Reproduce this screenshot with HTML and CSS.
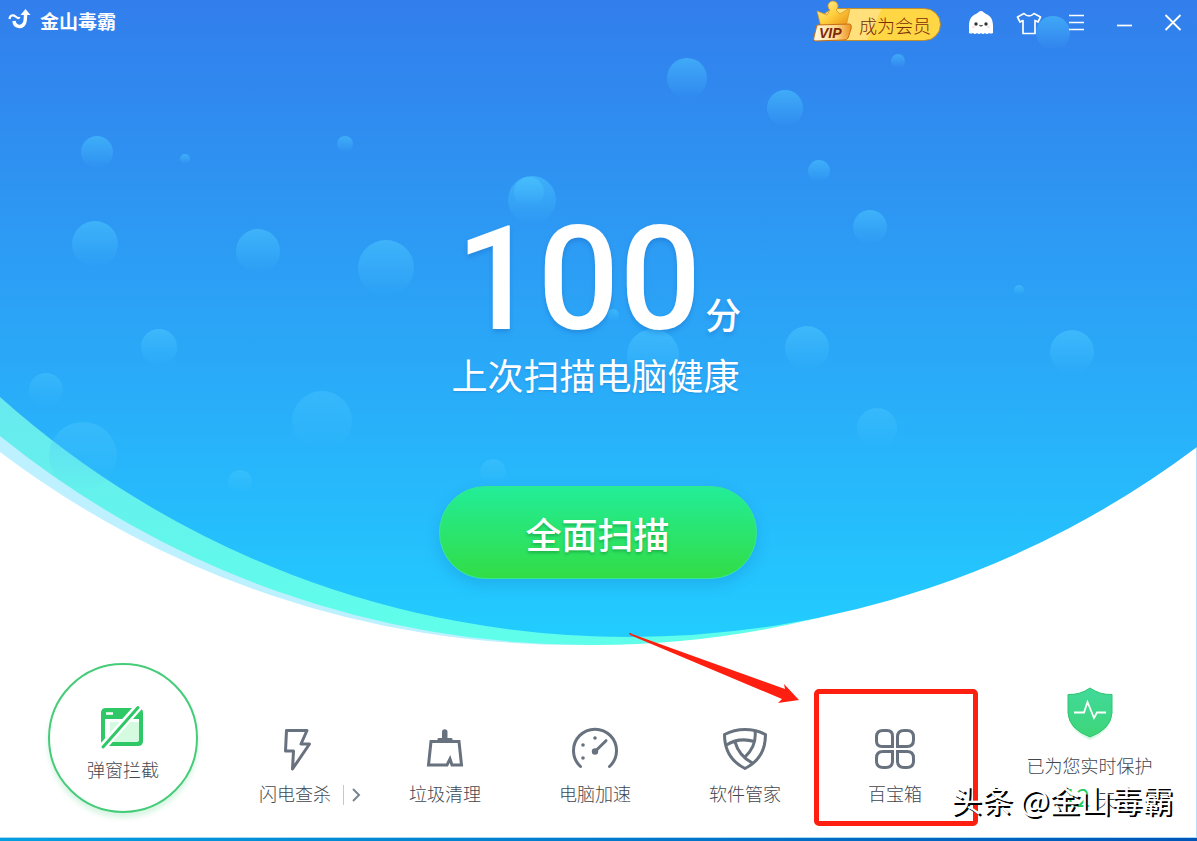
FILE: index.html
```html
<!DOCTYPE html>
<html lang="zh-CN">
<head>
<meta charset="utf-8">
<title>金山毒霸</title>
<link rel="stylesheet" href="styles.css">
</head>
<body>
<div class="app">
  <svg class="backdrop" viewBox="0 0 1197 647" preserveAspectRatio="none" aria-hidden="true">
    <defs>
      <linearGradient id="sky" gradientUnits="userSpaceOnUse" x1="0" y1="0" x2="0" y2="640">
        <stop offset="0" stop-color="#327eec"/>
        <stop offset="0.62" stop-color="#29adf9"/>
        <stop offset="1" stop-color="#22cdff"/>
      </linearGradient>
      <linearGradient id="mint" gradientUnits="userSpaceOnUse" x1="0" y1="397" x2="0" y2="645">
        <stop offset="0" stop-color="#68e9ee"/>
        <stop offset="1" stop-color="#5fffea"/>
      </linearGradient>
      <linearGradient id="bubble" x1="0" y1="0" x2="0" y2="1">
        <stop offset="0" stop-color="#4cc8ff" stop-opacity="0.55"/>
        <stop offset="1" stop-color="#4cc8ff" stop-opacity="0"/>
      </linearGradient>
    </defs>
    <path fill="#bdf1ff" d="M0 0V452A953 953 0 0 0 575 645A953 953 0 0 0 1100 487V0Z"/>
    <path fill="url(#mint)" d="M0 0V436A938 938 0 0 0 590 645A938 938 0 0 0 1100 497V0Z"/>
    <path fill="url(#sky)" d="M0 0V397A944 944 0 0 0 629 637A944 944 0 0 0 1197 447V0Z"/>
    <g fill="url(#bubble)">
      <circle cx="1053" cy="33" r="17"/><circle cx="898" cy="61" r="7"/>
      <circle cx="687" cy="78" r="20"/><circle cx="785" cy="108" r="18"/>
      <circle cx="819" cy="171" r="11"/><circle cx="870" cy="227" r="17"/>
      <circle cx="97" cy="152" r="16"/><circle cx="185" cy="159" r="5"/>
      <circle cx="345" cy="144" r="8"/><circle cx="95" cy="244" r="23"/>
      <circle cx="258" cy="251" r="22"/><circle cx="386" cy="268" r="28"/>
      <circle cx="532" cy="200" r="24"/><circle cx="529" cy="192" r="15"/>
      <circle cx="159" cy="347" r="18"/><circle cx="613" cy="315" r="6"/>
      <circle cx="653" cy="355" r="26"/><circle cx="807" cy="348" r="22"/>
      <circle cx="1019" cy="290" r="5"/><circle cx="1072" cy="352" r="22"/>
    </g>
    <g fill="url(#bubble)" opacity="0.75">
      <circle cx="46" cy="390" r="17"/><circle cx="322" cy="421" r="30"/>
      <circle cx="83" cy="456" r="34"/><circle cx="240" cy="482" r="12"/>
      <circle cx="493" cy="472" r="13"/><circle cx="877" cy="428" r="20"/>
    </g>
  </svg>

  <header class="titlebar">
    <div class="brand">
      <svg class="brand-mark" viewBox="0 0 24 24" aria-hidden="true">
        <path d="M1.500 10C2 6 5 5.500 7.500 7.500S11 9.500 11.500 8" fill="none" stroke="#fff" stroke-width="2.200"/>
        <path d="M6 12C6.500 18 14 19.500 16.500 14C17.500 12 17.500 9 17.500 5" fill="none" stroke="#fff" stroke-width="3.400"/>
        <path d="M17.500 0L22.500 6H12.500Z" fill="#fff"/>
      </svg>
      <span class="brand-name">金山毒霸</span>
    </div>
    <div class="tools">
      <button class="vip" type="button">
        <svg class="vip-art" viewBox="0 0 40 42" aria-hidden="true">
          <defs>
            <linearGradient id="gold" x1="0" y1="0" x2="1" y2="1">
              <stop offset="0" stop-color="#fff3b0"/><stop offset="0.5" stop-color="#ffcf3d"/><stop offset="1" stop-color="#e88a12"/>
            </linearGradient>
            <linearGradient id="plate" x1="0" y1="0" x2="1" y2="0">
              <stop offset="0" stop-color="#fffbe9"/><stop offset="0.6" stop-color="#ffd887"/><stop offset="1" stop-color="#ed9020"/>
            </linearGradient>
          </defs>
          <path d="M4 11L14 15L17 10A5 5 0 1 1 23 10L27 14L37 8L33 27H8Z" fill="url(#gold)" stroke="#d99524" stroke-width="0.800"/>
          <path d="M4 25L37 24Q39 25 38 29L35 38Q34 40 31 40L2 41Q0 40 1 37Z" fill="url(#plate)" stroke="#c76d15"/>
          <text class="vip-word" x="6" y="38">VIP</text>
        </svg>
        <span>成为会员</span>
      </button>
      <button class="tool" type="button" aria-label="助手">
        <svg viewBox="0 0 28 28"><path d="M14 2C16 2 17 4 19 5C24 7 26 11 26 17V24Q24 25 22 24Q20 26 18 24Q16 26 14 24Q12 26 10 24Q8 26 6 24Q4 25 2 24V17C2 11 4 7 9 5C11 4 12 2 14 2Z" fill="#fff"/><circle cx="9" cy="15" r="1.700" fill="#333"/><circle cx="19" cy="15" r="1.700" fill="#333"/><path d="M12.500 16Q14 18 15.500 16" fill="none" stroke="#333" stroke-width="1.200"/><path d="M5 18h3M20 18h3" stroke="#ffc7cf"/></svg>
      </button>
      <button class="tool" type="button" aria-label="换肤">
        <svg viewBox="0 0 28 28"><path d="M9 4.500Q14 9.500 19 4.500L25.500 8L23 13L20 11.500V24.500H8V11.500L5 13L2.500 8Z" fill="none" stroke="#fff" stroke-width="1.700" stroke-linejoin="round"/></svg>
      </button>
      <button class="tool" type="button" aria-label="菜单">
        <svg viewBox="0 0 28 28"><path d="M6 6.500H21M6 13.500H21M6 20.500H21" stroke="#fff" stroke-width="1.400"/></svg>
      </button>
      <button class="tool" type="button" aria-label="最小化">
        <svg viewBox="0 0 28 28"><path d="M6 16.500H21" stroke="#fff" stroke-width="1.700"/></svg>
      </button>
      <button class="tool" type="button" aria-label="关闭">
        <svg viewBox="0 0 28 28"><path d="M6.500 6L21.500 21M21.500 6L6.500 21" stroke="#fff" stroke-width="1.800"/></svg>
      </button>
    </div>
  </header>

  <main class="hero">
    <p class="score"><span class="score-value">100</span><span class="score-unit">分</span></p>
    <p class="summary">上次扫描电脑健康</p>
    <button class="scan" type="button">全面扫描</button>
  </main>

  <nav class="dock">
    <button class="popup-guard" type="button">
      <svg class="icon" viewBox="0 0 48 48" aria-hidden="true">
        <path d="M7 5H39Q44 5 44 10V38Q44 43 39 43H7Q2 43 2 38V10Q2 5 7 5Z" fill="#2ec866"/>
        <path d="M6 16H40V36Q40 39 37 39H6Z" fill="#fff"/>
        <path d="M11 19H40V36Q40 39 37 39H11Z" fill="#d4fbe0"/>
        <path d="M7 10.500H14" stroke="#fff" stroke-width="2.500"/>
        <path d="M2 46L41 2" stroke="#fff" stroke-width="8"/>
        <path d="M4 44L39 4.500" stroke="#2ec866" stroke-width="3" stroke-linecap="round"/>
      </svg>
      <span>弹窗拦截</span>
    </button>

    <div class="entry">
      <button class="feature" type="button">
        <svg class="icon line" viewBox="0 0 48 48" aria-hidden="true"><path stroke-linejoin="round" d="M15.500 5.500H36L30 19H38.500L21.500 44L22.500 26H14.500Z"/></svg>
        <span>闪电查杀</span>
      </button>
      <button class="more" type="button" aria-label="更多">
        <svg viewBox="0 0 12 16"><path d="M3 2L9 8L3 14" fill="none" stroke="#7b848e" stroke-width="2"/></svg>
      </button>
    </div>
    <div class="entry">
      <button class="feature" type="button">
        <svg class="icon line" viewBox="0 0 48 48" aria-hidden="true"><path d="M10 16.500H38L40.500 40H31L29 34L26 40H7.500Z"/><path d="M16.500 16.500V14Q16.500 13 18 13H21V7A2.700 2.700 0 0 1 26.500 7V13H30Q31.500 13 31.500 14V16.500Z" fill="#68727e" stroke="none"/></svg>
        <span>垃圾清理</span>
      </button>
    </div>
    <div class="entry">
      <button class="feature" type="button">
        <svg class="icon line" viewBox="0 0 48 48" aria-hidden="true"><path d="M9.500 41.500A21.500 21.500 0 1 1 38.500 41.500" stroke-linecap="round"/><path d="M24 26.500L35 15.700" stroke-linecap="round"/><g fill="#68727e" stroke="none"><circle cx="24" cy="26.500" r="3.200"/><circle cx="24" cy="13" r="1.800"/><circle cx="12" cy="20" r="1.800"/><circle cx="12" cy="33" r="1.800"/></g></svg>
        <span>电脑加速</span>
      </button>
    </div>
    <div class="entry">
      <button class="feature" type="button">
        <svg class="icon line" viewBox="0 0 48 48" aria-hidden="true"><path stroke-linejoin="round" d="M3.500 9.500Q13 4.500 24 4.500T44.500 9.500C44.500 25 37 37 24 43.500C11 37 3.500 25 3.500 9.500Z"/><path d="M5.500 20Q18 12 33.500 16.500M34 5.500Q36 21 24 32M14 17Q18 31 31.500 38"/></svg>
        <span>软件管家</span>
      </button>
    </div>
    <div class="entry marked">
      <button class="feature" type="button">
        <svg class="icon line" viewBox="0 0 48 48" aria-hidden="true"><path d="M12 5.500H16Q21.500 5.500 21.500 11V21.500H11Q5.500 21.500 5.500 16V12Q5.500 5.500 12 5.500ZM33 5.500H36Q42.500 5.500 42.500 12V15Q42.500 21.500 36 21.500H26.500V12Q26.500 5.500 33 5.500ZM12 26.500H21.500V36Q21.500 42.500 15 42.500H12Q5.500 42.500 5.500 36V33Q5.500 26.500 12 26.500ZM26.500 26.500H36Q42.500 26.500 42.500 33V36Q42.500 42.500 36 42.500H33Q26.500 42.500 26.500 36Z"/></svg>
        <span>百宝箱</span>
      </button>
      <svg class="pointer" viewBox="0 0 172 72" aria-hidden="true"><path d="M1 1.500Q2 0.500 4 2L157 57L156 52L171 68L150 71L154 67L2 3Z" fill="#ff1f10"/></svg>
    </div>

    <section class="status">
      <svg class="status-shield" viewBox="0 0 48 54" aria-hidden="true">
        <defs><linearGradient id="guard" x1="0" y1="0" x2="0" y2="1"><stop offset="0" stop-color="#41d99a"/><stop offset="1" stop-color="#3ed678"/></linearGradient></defs>
        <path d="M24 5Q34 12 46 11V28Q45 45 24 54Q3 45 2 28V11Q14 12 24 5Z" fill="#d6f8e4"/>
        <path d="M24 2Q34 9 46 8.500V27Q45 43 24 51Q3 43 2 27V8.500Q14 9 24 2Z" fill="url(#guard)" stroke="#2fc670"/>
        <path d="M8 26.500H18L21.500 16L28 32L31 26.500H40" fill="none" stroke="#fff" stroke-width="1.800"/>
      </svg>
      <span class="status-text">已为您实时保护</span>
      <span class="status-days"><b>12</b>天</span>
      <span class="watermark">头条 @金山毒霸</span>
    </section>
  </nav>
  <div class="taskbar"></div>
</div>
</body>
</html>
```

FILE: styles.css
```css
*,
*::after { box-sizing: border-box; }

body {
  margin: 0;
  background: #fff;
  color: #42474e;
  font-family: "Noto Sans CJK SC", sans-serif;
  font-size: 18px;
  line-height: 24px;
}

p { margin: 0; }

button {
  padding: 0;
  border: 0;
  background: none;
  color: inherit;
  font: inherit;
  cursor: pointer;
}

svg { display: block; }

.app {
  position: relative;
  display: flex;
  flex-direction: column;
  min-height: 100vh;
  background: linear-gradient(#b9defb, #b9defb) right / 1px 100% no-repeat;
  overflow: hidden;
}

.backdrop {
  position: absolute;
  top: 0;
  left: 0;
  width: 100%;
  height: 647px;
}

.titlebar {
  position: relative;
  display: flex;
  justify-content: space-between;
  align-items: center;
  height: 46px;
  padding-left: 8px;
  color: #fff;
}

.brand {
  display: flex;
  align-items: center;
  gap: 8px;
  padding-bottom: 4px;
}

.brand-mark {
  width: 24px;
  height: 24px;
}

.brand-name {
  font-size: 19px;
  font-weight: 700;
}

.tools {
  display: flex;
  align-items: center;
}

.vip {
  position: relative;
  height: 33px;
  margin: 3px 16px 0 0;
  padding: 0 9px 0 38px;
  border: 1px solid #c08e2e;
  border-radius: 17px;
  background: linear-gradient(115deg, #ffe07a 0 45%, #ffd643 46%);
  color: #7a2c08;
  font-weight: 300;
  line-height: 30px;
}

.vip-art {
  position: absolute;
  left: -8px;
  bottom: -2px;
  width: 40px;
  height: 42px;
}

.vip-word {
  fill: #7d260b;
  font: italic 900 14px "Liberation Sans", sans-serif;
}

.tool {
  display: grid;
  place-items: center;
  width: 48px;
  height: 46px;
}

.tool svg {
  width: 28px;
  height: 28px;
}

.hero {
  position: relative;
  display: flex;
  flex-direction: column;
  align-items: center;
  height: 601px;
  padding-top: 174px;
  color: #fff;
}

.score {
  display: flex;
  align-items: baseline;
  gap: 4px;
  height: 128px;
  line-height: 120px;
  text-shadow: 0 3px 4px rgba(20, 90, 180, 0.3);
}

.score-value {
  font-family: Roboto, sans-serif;
  font-size: 144px;
  font-weight: 500;
}

.score-unit {
  font-size: 36px;
  font-weight: 500;
}

.summary {
  padding-right: 6px;
  font-size: 36px;
  line-height: 52px;
  text-shadow: 0 1px 2px rgba(20, 90, 180, 0.3);
}

.scan {
  width: 318px;
  height: 93px;
  margin: 86px 2px 0 0;
  border: 1px solid #35e88f;
  border-radius: 47px;
  background: linear-gradient(#22ed98, #32dd45);
  box-shadow: 0 6px 14px rgba(20, 100, 180, 0.22);
  font-size: 36px;
  font-weight: 500;
  text-shadow: 0 2px 3px rgba(0, 110, 40, 0.4);
}

.dock {
  position: relative;
  display: grid;
  grid-template-columns: 220fr repeat(5, 150fr) 227fr;
  flex: 1;
  min-height: 190px;
  font-weight: 300;
}

.icon {
  width: 48px;
  height: 48px;
}

.line {
  fill: none;
  stroke: #68727e;
  stroke-width: 3;
}

.popup-guard {
  display: flex;
  flex-direction: column;
  align-items: center;
  gap: 6px;
  width: 150px;
  height: 150px;
  margin: 16px 0 0 48px;
  padding-top: 38px;
  border: 2px solid #45cc78;
  border-radius: 50%;
  box-shadow: 0 5px 5px rgba(69, 204, 120, 0.2);
}

.entry {
  position: relative;
  display: flex;
  justify-content: center;
  align-items: flex-start;
  padding-top: 78px;
}

.feature {
  display: flex;
  flex-direction: column;
  align-items: center;
  gap: 8px;
}

.more {
  position: absolute;
  left: 123px;
  top: 138px;
  padding: 2px 6px;
  border-left: 1px solid #c5c8cc;
}

.more svg {
  width: 12px;
  height: 16px;
}

.marked::after {
  content: "";
  position: absolute;
  top: 42px;
  left: -6px;
  right: -8px;
  height: 137px;
  border: 5px solid #ff1f10;
  border-radius: 5px;
}

.pointer {
  position: absolute;
  top: -15px;
  right: 170px;
  width: 172px;
  height: 72px;
}

.status {
  position: relative;
  display: flex;
  flex-direction: column;
  align-items: center;
  padding: 39px 0 0 12px;
}

.status-shield {
  width: 48px;
  height: 54px;
}

.status-text { margin-top: 13px; }

.status-days {
  display: flex;
  align-items: baseline;
  gap: 8px;
  margin-top: 8px;
}

.status-days b {
  color: #24cd62;
  font-size: 24px;
  font-weight: 400;
}

.watermark {
  position: absolute;
  right: 24px;
  bottom: 16px;
  color: #fff;
  font-size: 31px;
  font-weight: 400;
  line-height: 44px;
  white-space: nowrap;
  text-shadow: 2px 2px 0 #000;
}

.taskbar {
  height: 4px;
  border-top: 1px solid #a9d8f2;
  background: linear-gradient(90deg, #049fe0, #0056b8);
}
```
